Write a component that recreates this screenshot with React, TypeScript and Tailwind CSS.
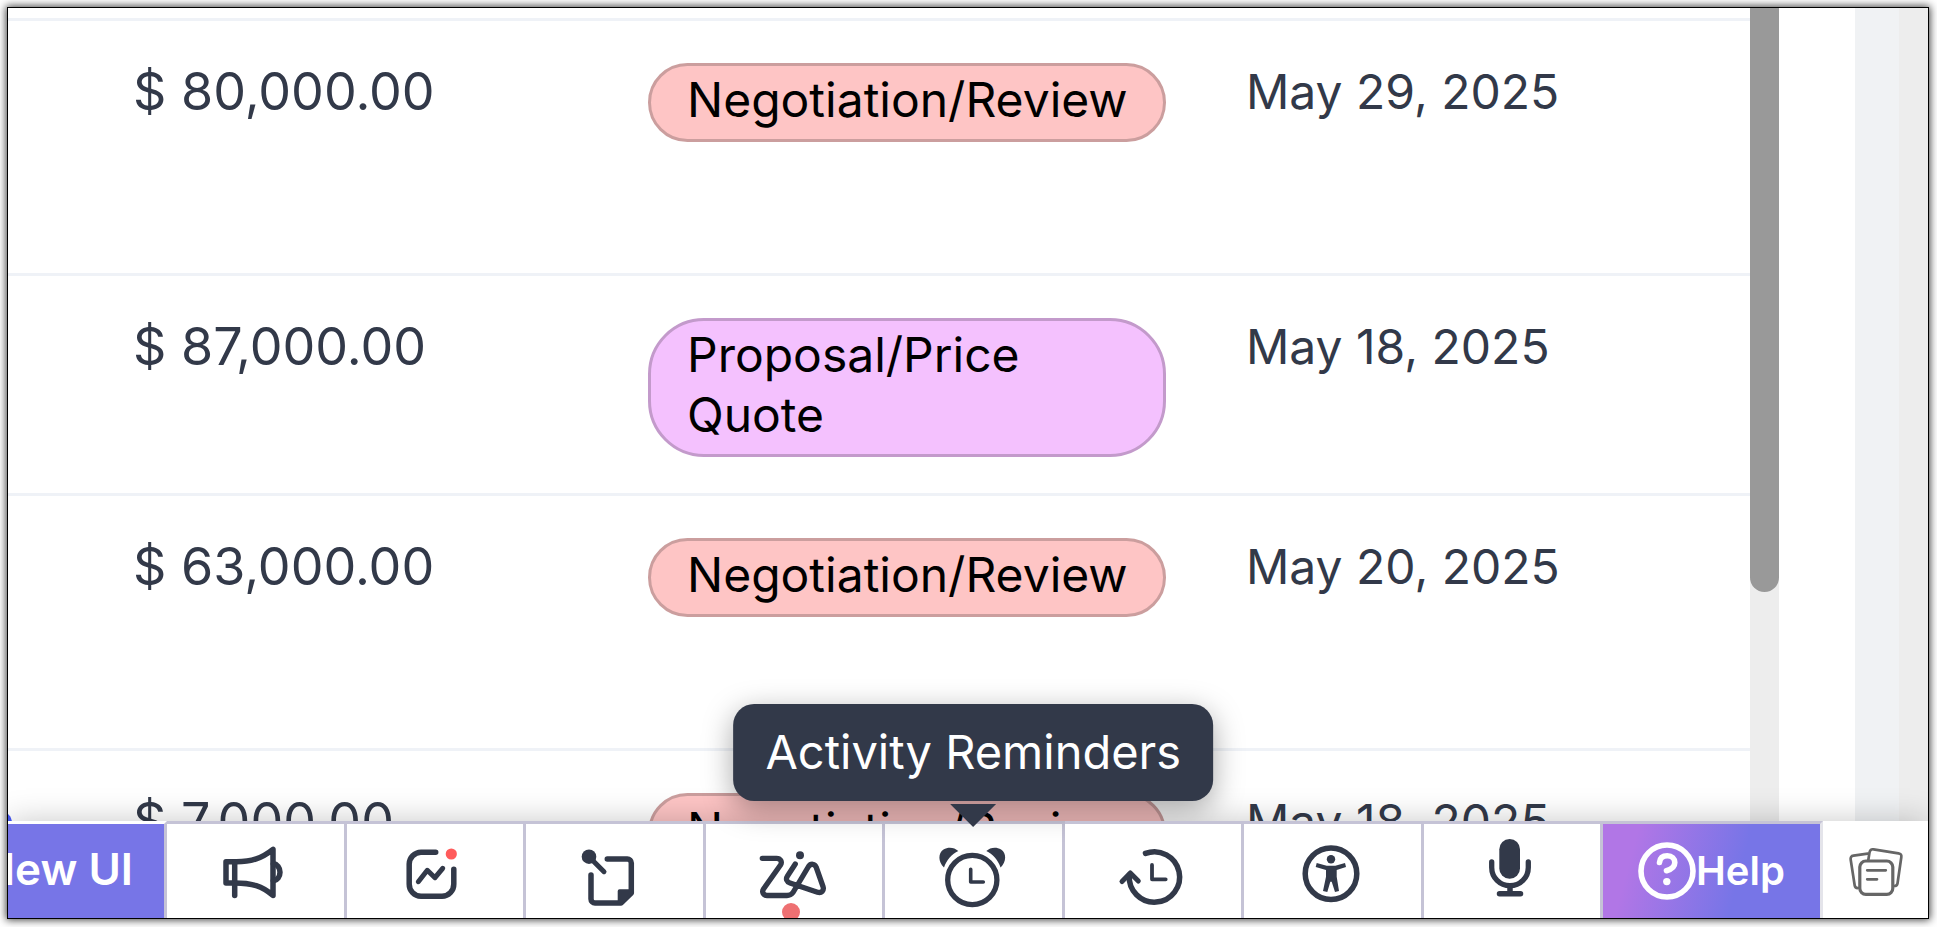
import type { ReactNode } from "react";

type Stage = "Negotiation/Review" | "Proposal/Price Quote";

interface Deal {
  amount: string;
  stage: Stage;
  closing: string;
  rowHeight: string;
}

const deals: Deal[] = [
  { amount: "$ 80,000.00", stage: "Negotiation/Review", closing: "May 29, 2025", rowHeight: "h-[255px]" },
  { amount: "$ 87,000.00", stage: "Proposal/Price Quote", closing: "May 18, 2025", rowHeight: "h-[220px]" },
  { amount: "$ 63,000.00", stage: "Negotiation/Review", closing: "May 20, 2025", rowHeight: "h-[255px]" },
  { amount: "$ 7,000.00", stage: "Negotiation/Review", closing: "May 18, 2025", rowHeight: "h-[255px]" },
];

const stageStyle: Record<Stage, string> = {
  "Negotiation/Review": "rounded-[40px] border-[#cb9e9e] bg-[#fec5c5]",
  "Proposal/Price Quote": "rounded-[56px] border-[#c39acb] bg-[#f4c1fe]",
};

function Icon({ children }: { children: ReactNode }) {
  return (
    <svg
      width="80"
      height="94"
      viewBox="0 0 80 94"
      fill="none"
      stroke="#323949"
      strokeWidth="5.5"
      strokeLinecap="round"
      strokeLinejoin="round"
      aria-hidden="true"
    >
      {children}
    </svg>
  );
}

function MegaphoneIcon() {
  return (
    <Icon>
      <path d="M19.7 37.7H11V59H19.7" />
      <path d="M19.7 37.7C37 38 47 34 58 25.3V71.5C47 62 37 59 19.7 59" />
      <path d="M19.7 37.7V71.5" />
      <path d="M58.3 39.5A7.5 8.8 0 0 1 58.3 57" />
    </Icon>
  );
}

function ChartIcon() {
  return (
    <Icon>
      <path d="M40.7 28.2H26A12 12 0 0 0 14.2 40V60A12 12 0 0 0 26 72.2H47A12 12 0 0 0 58.8 60V45.3" />
      <path strokeWidth="5" d="M23.3 57.7L32.3 46.3L40 53.7L47.7 44.3" />
      <circle cx="56.3" cy="30" r="5.6" fill="#ff5b5b" stroke="none" />
    </Icon>
  );
}

function StickyNoteIcon() {
  return (
    <Icon>
      <circle cx="15" cy="32.7" r="7.3" fill="#323949" stroke="none" />
      <path strokeWidth="5" d="M15 32.7L30 47.7" />
      <path d="M33.3 35H53.3A4 4 0 0 1 57.3 39V69L47 79H21A4 4 0 0 1 17 75V51" />
      <path fill="#323949" stroke="none" d="M45.5 65.3H59V70L48 80.5H43.7V67A1.8 1.8 0 0 1 45.5 65.3Z" />
    </Icon>
  );
}

function ZiaIcon() {
  return (
    <Icon>
      <path
        strokeWidth="5.3"
        d="M8.3 34.3H22.5C26.5 34.3 28.5 37.8 26.5 41L9.5 65C7.5 68 9.5 71.5 13 71.5H33C35.5 71.5 37.5 70.5 39 68.5L54.5 42.5C56.7 39.2 61 39.5 62.3 43.5L69 62.5C70.3 66.5 67.5 69.5 63.5 68.2L36 59C32.5 57.8 31.5 55 33.5 52L41.3 40"
      />
      <circle cx="46" cy="31.3" r="4" fill="#323949" stroke="none" />
      <circle cx="37" cy="88" r="9" fill="#ee7072" stroke="none" />
    </Icon>
  );
}

function AlarmIcon() {
  return (
    <Icon>
      <circle cx="39.3" cy="56" r="24.6" strokeWidth="5.3" />
      <path strokeWidth="3.6" d="M37.7 45.3V58H50.3" />
      <g fill="#323949" stroke="none">
        <path d="M11 43.5C5 38 5 29 10.5 25.5C15.5 22.5 21.5 23.5 25.3 27C19 30 13.5 36 11 43.5Z" />
        <path d="M67.6 43.5C73.6 38 73.6 29 68.1 25.5C63.1 22.5 57.1 23.5 53.3 27C59.6 30 65.1 36 67.6 43.5Z" />
      </g>
    </Icon>
  );
}

function HistoryIcon() {
  return (
    <Icon>
      <path d="M32.5 29.4A25.2 25.2 0 1 1 16.3 51" />
      <path strokeWidth="5" d="M9 57.5L17.3 49L25.3 57" />
      <path strokeWidth="3.8" d="M39 41V55.3H52.7" />
    </Icon>
  );
}

function AccessibilityIcon() {
  return (
    <Icon>
      <circle cx="39" cy="49.7" r="25.8" />
      <g fill="#323949" stroke="none">
        <circle cx="39" cy="35.3" r="4.2" />
        <path d="M24.7 39L34.7 41.7H43.3L53 39L54 43L44.7 46V52.7L47 67L43 68L39.7 57.7H38.3L35.3 68L31 67L34 52.7V46L23.7 43Z" />
      </g>
    </Icon>
  );
}

function MicIcon() {
  return (
    <Icon>
      <rect x="27.3" y="15" width="20.7" height="39.7" rx="10.3" fill="#323949" stroke="none" />
      <path strokeWidth="5.3" d="M19.7 38V43.4A18.3 18.3 0 0 0 56.3 43.4V38" />
      <path d="M38 62V69.7M27.5 69.7H48.5" />
    </Icon>
  );
}

function HelpIcon() {
  return (
    <svg
      width="58"
      height="58"
      viewBox="0 0 58 58"
      fill="none"
      stroke="#fff"
      strokeWidth="5.6"
      strokeLinecap="round"
      aria-hidden="true"
    >
      <circle cx="29" cy="29" r="26" />
      <path d="M21.5 20.5C22 16 25 13.8 29.3 13.8C34 13.8 36.8 16.6 36.8 20.5C36.8 25 33 27.4 28.5 28.7" />
      <circle cx="28.8" cy="39.6" r="3.7" fill="#fff" stroke="none" />
    </svg>
  );
}

function NotesIcon() {
  return (
    <svg
      width="60"
      height="60"
      viewBox="0 0 60 60"
      fill="none"
      stroke="#666"
      strokeWidth="2.7"
      strokeLinecap="round"
      strokeLinejoin="round"
      aria-hidden="true"
    >
      <path d="M12.3 44C10.3 44.2 9 43.5 8.7 41.5L4.7 15.7C4.3 13.3 5.2 12 7.5 11.7L21.7 9.7" />
      <path d="M22.3 16L23.5 8.5C24 6 25.3 5 27.5 5.3L52.5 9.3C54.8 9.7 55.7 11 55.3 13.2L51.5 39.5C51.2 41.3 50.2 42 48.3 42" />
      <rect x="13.8" y="17" width="33" height="33.3" rx="6" strokeWidth="3.2" />
      <path d="M21.2 26.3H39.8M21.2 35.3H31" />
    </svg>
  );
}

const tools = [
  { label: "Announcements", icon: <MegaphoneIcon /> },
  { label: "Analytics", icon: <ChartIcon /> },
  { label: "Sticky Notes", icon: <StickyNoteIcon /> },
  { label: "Zia", icon: <ZiaIcon /> },
  { label: "Activity Reminders", icon: <AlarmIcon />, tooltip: true },
  { label: "Recent Items", icon: <HistoryIcon /> },
  { label: "Accessibility", icon: <AccessibilityIcon /> },
  { label: "Voice", icon: <MicIcon /> },
];

function Tooltip({ text }: { text: string }) {
  return (
    <span className="pointer-events-none absolute bottom-[91px] left-1/2 flex -translate-x-1/2 flex-col items-center gap-[3px]">
      <span
        role="tooltip"
        className="rounded-[21px] bg-[#323949] px-8 pt-[17px] pb-[19px] text-[47px] leading-[61px] whitespace-nowrap text-white shadow-[0_8px_30px_rgba(0,0,0,0.35)]"
      >
        {text}
      </span>
      <svg width="46" height="23" viewBox="0 0 46 23" aria-hidden="true">
        <path d="M0 0H46L23 23Z" fill="#323949" />
      </svg>
    </span>
  );
}

function DealsTable() {
  return (
    <table className="w-full table-fixed border-collapse text-left">
      <colgroup>
        <col className="w-[640px]" />
        <col className="w-[560px]" />
        <col />
      </colgroup>
      <tbody>
        {deals.map((deal, i) => (
          <tr key={i} className={`border-t-[3px] border-[#eff2f7] align-top ${deal.rowHeight}`}>
            <td className="pt-[41px] pl-[125px] text-[52px] leading-[60px] text-[#323949]">{deal.amount}</td>
            <td className="pt-[42px]">
              <span
                className={`block w-[518px] border-[3px] px-9 pt-1 pb-[9px] text-[48px] leading-[60px] text-black ${stageStyle[deal.stage]}`}
              >
                {deal.stage}
              </span>
            </td>
            <td className="pt-[41px] pl-[38px] text-[48px] leading-[60px] text-[#323949]">{deal.closing}</td>
          </tr>
        ))}
      </tbody>
    </table>
  );
}

export default function App() {
  return (
    <div className="h-screen bg-white pt-[7px] pr-2 pb-2 pl-[7px] font-['Inter','Liberation_Sans',sans-serif]">
      <div className="h-full shadow-[0_0_8px_1px_rgba(0,0,0,0.75)]">
        <div className="relative flex h-full flex-col overflow-hidden border border-black bg-white">
          <main className="flex min-h-0 flex-1 overflow-hidden">
            <div className="min-w-0 flex-1 overflow-hidden pt-[10px]">
              <DealsTable />
            </div>
            <div className="w-[29px] bg-[#ededed]">
              <div className="h-[584px] rounded-b-[15px] bg-[#999]" />
            </div>
            <div className="w-[76px]" />
            <div className="w-11 bg-[#f0f2f4]" />
            <div className="w-[29px] bg-[#ededed]" />
          </main>

          <footer className="relative flex h-[97px] shrink-0 bg-white shadow-[0_0_30px_rgba(0,0,0,0.22)]">
            <span className="absolute -top-[10px] -left-5 h-6 w-6 rounded-full bg-[#4353e8]" />
            <button
              type="button"
              className="relative flex w-[159px] items-center justify-end overflow-hidden border-t-[3px] border-r-[3px] border-t-white border-r-[#c5c3d6] bg-[#7775e7] pr-[31px] pb-1 text-[44px] leading-[60px] font-semibold whitespace-nowrap text-white"
            >
              New UI
            </button>
            {tools.map((tool) => (
              <button
                key={tool.label}
                type="button"
                aria-label={tool.label}
                className="relative flex flex-1 items-center justify-center border-t-[3px] border-r-[3px] border-[#c5c3d6] bg-white"
              >
                {tool.icon}
                {tool.tooltip && <Tooltip text={tool.label} />}
              </button>
            ))}
            <button
              type="button"
              className="flex w-[220px] items-center justify-center border-t-[3px] border-r-[3px] border-t-[#c5c3d6] border-r-[#e4e4ea] bg-[linear-gradient(105deg,#b176e6_0%,#b176e6_15%,#7775e7_62%)] text-[40px] leading-[60px] font-semibold text-white"
            >
              <HelpIcon />
              Help
            </button>
            <button type="button" aria-label="Notes" className="flex w-[105px] items-center justify-center bg-white pt-2">
              <NotesIcon />
            </button>
          </footer>
        </div>
      </div>
    </div>
  );
}
